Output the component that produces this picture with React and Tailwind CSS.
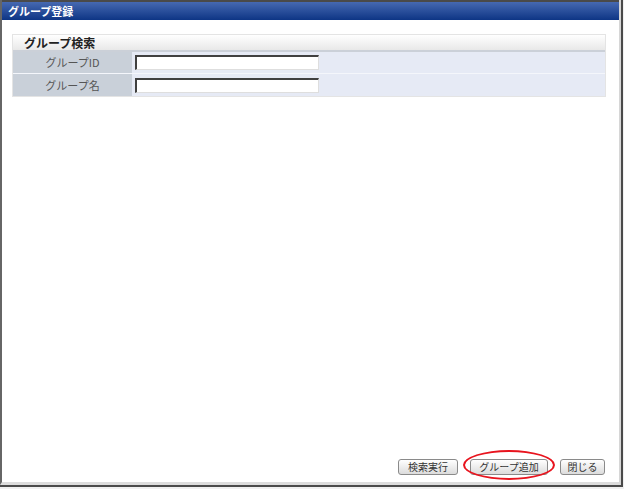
import React from 'react';

const jp = { fontFamily: '"Noto Sans CJK JP", "Noto Sans", sans-serif' };

const Field = ({ label, last }) => (
  <div className={`flex h-[22px] ${last ? '' : 'border-b border-[#f4f6fb]'}`}>
    <div className="w-[119px] bg-[#c9d0d9] flex items-center justify-center text-[11px] text-[#555] leading-none">
      {label}
    </div>
    <div className="flex-1 bg-[#e6eaf5] flex items-center pl-[3px]">
      <input
        type="text"
        className="w-[184px] h-[15px] bg-white border-t-2 border-l-2 border-r border-b border-t-[#404040] border-l-[#404040] border-r-[#dedede] border-b-[#dedede] outline-none"
      />
    </div>
  </div>
);

const Button = ({ children, w }) => (
  <button
    className={`${w} h-[16px] rounded-[3px] border border-[#8a8a8a] bg-gradient-to-b from-white to-[#dcdcdc] text-[10px] leading-none text-[#333] flex items-center justify-center`}
  >
    {children}
  </button>
);

export default function App() {
  return (
    <div className="w-[624px] h-[489px] bg-[#f0f0f0]" style={jp}>
      <div className="w-[623px] h-[487px] border-r-2 border-b-2 border-[#4a4a4a] flex flex-col">
        <div className="flex-1 flex flex-col bg-white border-l-2 border-l-[#666] border-r-2 border-r-[#d6d6d6] border-b-[3px] border-b-[#dcdcdc]">
          <div className="h-[20px] border-t-2 border-[#4a4a4a] bg-gradient-to-b from-[#4669b2] to-[#0d3585] flex items-center pl-[6px] text-white font-bold text-[11px] leading-none">
            グループ登録
          </div>

          <div className="pl-[10px] pt-[14px] pr-[12px]">
            <div className="w-[594px] border border-[#e4e4e4]">
              <div className="h-[17px] bg-gradient-to-b from-white to-[#e8e8e8] border-b-2 border-[#cbd0d8] flex items-center pl-[11px] text-[12px] font-bold text-[#222] leading-none">
                グループ検索
              </div>
              <Field label="グループID" />
              <Field label="グループ名" last />
            </div>
          </div>

          <div className="flex-1" />

          <div className="relative flex justify-end items-center gap-[12px] pr-[14px] pb-[7px]">
            <Button w="w-[60px]">検索実行</Button>
            <Button w="w-[78px]">グループ追加</Button>
            <Button w="w-[45px]">閉じる</Button>
            <div className="absolute left-[461px] top-[-9px] w-[92px] h-[30px] rounded-[50%] border-2 border-[#e8141e] pointer-events-none" />
          </div>
        </div>
      </div>
    </div>
  );
}
